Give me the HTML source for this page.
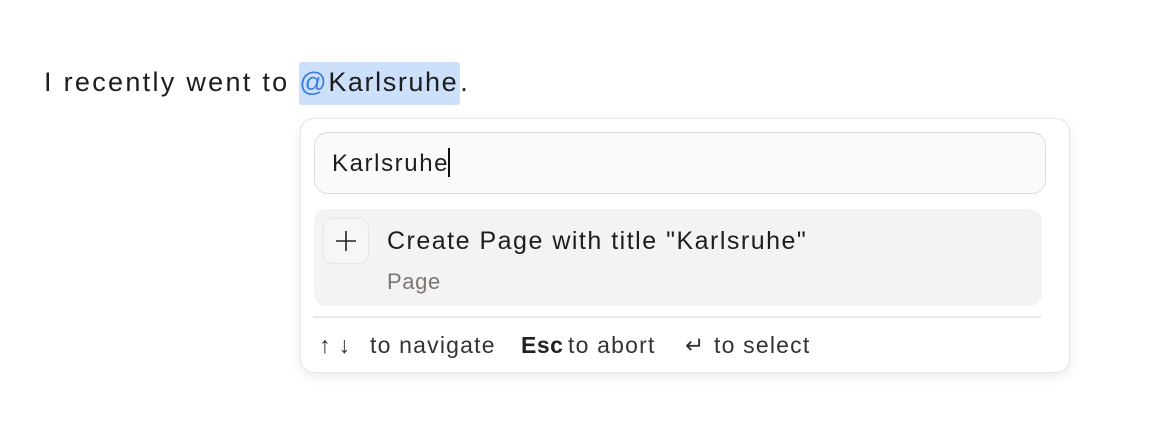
<!DOCTYPE html>
<html><head><style>
body{margin:0;width:1150px;height:440px;background:#fff;font-family:"Liberation Sans",sans-serif;color:#1d1d1d;position:relative;overflow:hidden}
.t{position:absolute;left:44px;top:62px;font-size:27px;letter-spacing:2.3px;line-height:40px;white-space:nowrap}
.hl{background:#cde0fb;border-radius:3px;padding:5px 2px 8px 0;letter-spacing:1.6px}
.at{color:#3b7fd9}
.pop{position:absolute;left:300px;top:118px;width:768px;height:253px;border:1px solid #e4e4e4;border-radius:14px;background:#fff;box-shadow:0 4px 12px rgba(0,0,0,.08)}
.inp{position:absolute;left:13px;top:13px;height:62px;border:1px solid #dcdcdc;border-radius:14px;background:#fafafa;font-size:24px;letter-spacing:1.6px;line-height:62px;padding-left:17px;box-sizing:border-box;width:732px}
.cur{display:inline-block;width:2px;height:29px;background:#111;vertical-align:middle;margin-top:-4px;margin-left:-1px}
.item{position:absolute;left:13px;top:90px;width:728px;height:97px;background:#f3f3f3;border-radius:12px}
.plus{position:absolute;left:9px;top:9px;width:46px;height:46px;border:1px solid #e6e6e6;border-radius:10px;background:#f6f6f6;box-sizing:border-box}
.tt{position:absolute;left:73px;top:17px;font-size:25px;letter-spacing:1.5px;line-height:30px}
.sub{position:absolute;left:73px;top:60px;font-size:22px;letter-spacing:0.6px;color:#7d7572}
.div{position:absolute;left:12px;right:28px;top:197px;height:2px;background:#e8e8e8}
.ft span{position:absolute;top:211px;font-size:23px;letter-spacing:1.2px;line-height:30px;color:#333;white-space:nowrap}
</style></head><body>
<div class="t">I recently went to <span class="hl"><span class="at">@</span>Karlsruhe</span>.</div>
<div class="pop">
<div class="inp">Karlsruhe<span class="cur"></span></div>
<div class="item">
<div class="plus"><svg width="46" height="46" viewBox="0 0 46 46" style="position:absolute;left:-1px;top:-1px"><path d="M23 13v20M13 23h20" stroke="#222" stroke-width="1.6"/></svg></div>
<div class="tt">Create Page with title "Karlsruhe"</div>
<div class="sub">Page</div>
</div>
<div class="div"></div>
<div class="ft">
<span style="left:18px;letter-spacing:8px">↑↓</span>
<span style="left:69px">to navigate</span>
<span style="left:220px;color:#222;font-weight:bold;letter-spacing:0.5px">Esc</span>
<span style="left:267px">to abort</span>
<span style="left:384px">↵</span>
<span style="left:413px">to select</span>
</div>
</div>
</body></html>
